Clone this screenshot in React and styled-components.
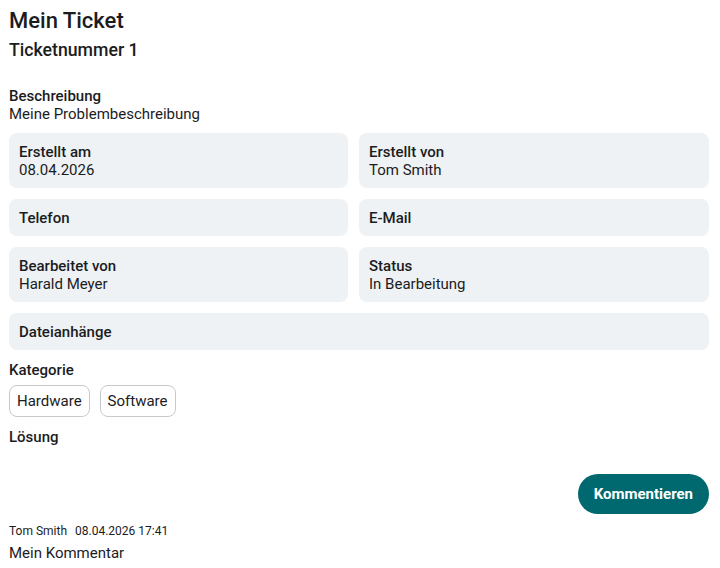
import { createGlobalStyle, styled } from 'styled-components';

const GlobalStyle = createGlobalStyle`
  html, body {
    margin: 0;
    padding: 0;
    background: #ffffff;
  }
  body {
    font-family: Roboto, "Noto Sans", sans-serif;
    color: #1b1c1e;
    -webkit-font-smoothing: antialiased;
  }
`;

const fields = [
  { label: 'Erstellt am', value: '08.04.2026' },
  { label: 'Erstellt von', value: 'Tom Smith' },
  { label: 'Telefon' },
  { label: 'E-Mail' },
  { label: 'Bearbeitet von', value: 'Harald Meyer' },
  { label: 'Status', value: 'In Bearbeitung' },
  { label: 'Dateianhänge', wide: true },
];

const categories = ['Hardware', 'Software'];

const App = () => {
  return (
    <Page>
      <GlobalStyle />
      <Title>Mein Ticket</Title>
      <Subtitle>Ticketnummer 1</Subtitle>

      <Block>
        <Label>Beschreibung</Label>
        <Value>Meine Problembeschreibung</Value>
      </Block>

      <FieldGrid>
        {fields.map((f) => (
          <Field key={f.label} $wide={f.wide}>
            <Label>{f.label}</Label>
            {f.value && <Value>{f.value}</Value>}
          </Field>
        ))}
      </FieldGrid>

      <Section>
        <Label>Kategorie</Label>
        <Chips>
          {categories.map((c) => (
            <Chip key={c}>{c}</Chip>
          ))}
        </Chips>
      </Section>

      <Section>
        <Label>Lösung</Label>
      </Section>

      <Actions>
        <CommentButton>Kommentieren</CommentButton>
      </Actions>

      <Comment>
        <CommentMeta>
          <span>Tom Smith</span>
          <span>08.04.2026 17:41</span>
        </CommentMeta>
        <Value>Mein Kommentar</Value>
      </Comment>
    </Page>
  );
};

export default App;

const Page = styled.div`
  padding: 9px 11px 9px 9px;
  width: 720px;
  box-sizing: border-box;
`;

const Title = styled.h1`
  margin: 0;
  font-size: 22px;
  line-height: 24px;
  font-weight: 500;
`;

const Subtitle = styled.h2`
  margin: 6px 0 0;
  font-size: 17.7px;
  line-height: 22px;
  font-weight: 500;
`;

const Block = styled.div`
  margin-top: 26px;
`;

const Label = styled.div`
  font-size: 15px;
  line-height: 18px;
  font-weight: 500;
`;

const Value = styled.div`
  font-size: 15px;
  line-height: 18px;
  font-weight: 400;
`;

const FieldGrid = styled.div`
  margin-top: 10px;
  display: grid;
  grid-template-columns: 339px 1fr;
  gap: 11px;
`;

const Field = styled.div`
  grid-column: ${(p) => (p.$wide ? '1 / -1' : 'auto')};
  background: #eef2f5;
  border-radius: 8px;
  padding: 10px 10px 9px;
`;

const Section = styled.div`
  margin-top: 11px;
`;

const Chips = styled.div`
  margin-top: 6px;
  display: flex;
  gap: 10px;
`;

const Chip = styled.div`
  height: 32px;
  box-sizing: border-box;
  padding: 0 7px;
  display: flex;
  align-items: center;
  border: 1px solid #c6cacd;
  border-radius: 8px;
  font-size: 15px;
`;

const Actions = styled.div`
  margin-top: 28px;
  display: flex;
  justify-content: flex-end;
`;

const CommentButton = styled.button`
  height: 40px;
  padding: 0 16px;
  border: none;
  border-radius: 20px;
  background: #00696f;
  color: #ffffff;
  font-family: Roboto, "Noto Sans", sans-serif;
  font-size: 15px;
  font-weight: 700;
  cursor: pointer;
`;

const Comment = styled.div`
  margin-top: 10px;
`;

const CommentMeta = styled.div`
  display: flex;
  gap: 8px;
  font-size: 12px;
  line-height: 14px;
  margin-bottom: 6px;
`;
